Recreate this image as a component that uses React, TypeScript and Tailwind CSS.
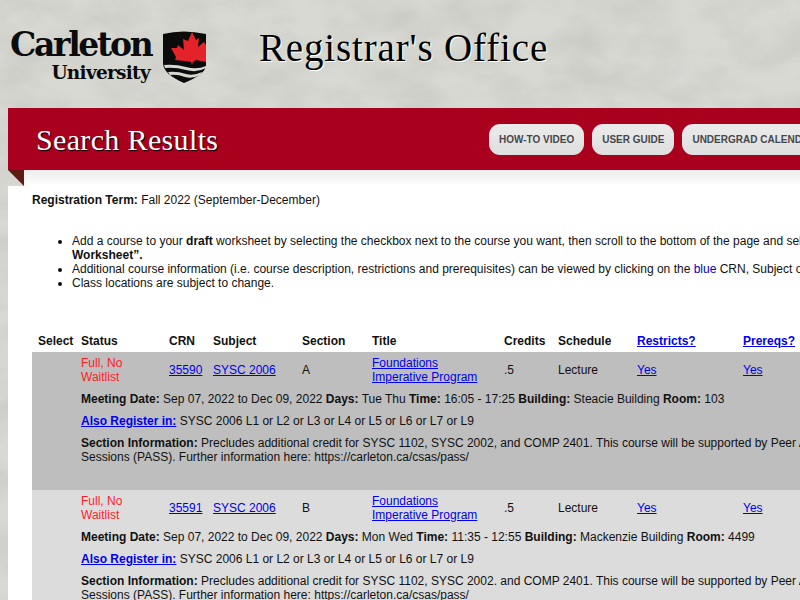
const Maple = () => (
  <svg width="43" height="53" viewBox="0 0 43 53" className="shrink-0">
    <path d="M0 3 Q20 -2 43 3 L43 34 Q43 43 21 52 Q0 43 0 32 Z" fill="#0b0b0b" />
    <path
      d="M29 1 L33 9 L36 7 L35 16 L41 11 L43 14 L43 31 L33 29 L30 31 L29 34 L28 31 L22 30 L12 29 L13 26 L8 17 L14 17 L15 14 L21 19 L20 8 L25 10 Z"
      fill="#e4222a"
    />
    <path d="M1 34 Q12 33 23 36 Q34 39 43 35 L43 37 Q34 42 23 39 Q12 36 2 37 Z" fill="#d8d8d2" />
    <path d="M5 41 Q14 40 23 43 Q31 45 39 41 L37 44 Q30 48 22 46 Q14 43 7 44 Z" fill="#d8d8d2" />
  </svg>
);

const rows = [
  {
    crn: "35590",
    section: "A",
    bg: "bg-[#bebebe]",
    days: "Tue Thu",
    time: "16:05 - 17:25",
    building: "Steacie Building",
    room: "103",
    info: "Precludes additional credit for SYSC 1102, SYSC 2002, and COMP 2401. This course will be supported by Peer Assisted Study",
  },
  {
    crn: "35591",
    section: "B",
    bg: "bg-[#dcdcdc]",
    days: "Mon Wed",
    time: "11:35 - 12:55",
    building: "Mackenzie Building",
    room: "4499",
    info: "Precludes additional credit for SYSC 1102, SYSC 2002. and COMP 2401. This course will be supported by Peer Assisted Study",
  },
];

const linkClass = "text-[#0000ee] underline";

export default function App() {
  return (
    <div className="relative w-[800px] h-[600px] overflow-hidden bg-[#d8d9d3] font-['Liberation_Sans',Arial,sans-serif] text-[12px] leading-[14px] text-[#111]">
      {/* stone texture behind the page */}
      <svg className="absolute inset-0" width="800" height="600">
        <filter id="stone">
          <feTurbulence type="fractalNoise" baseFrequency="0.018 0.03" numOctaves="6" seed="7" />
          <feColorMatrix values="0 0 0 0 0.45  0 0 0 0 0.45  0 0 0 0 0.42  1.1 0 0 0 -0.38" />
        </filter>
        <rect width="800" height="600" filter="url(#stone)" opacity="0.6" />
      </svg>

      <div className="relative">
        <header className="flex h-[108px] items-start">
          <div className="flex w-[250px] shrink-0 items-start pl-[10px] pt-[29px]">
            <div className="w-[140px] text-right font-['DejaVu_Serif',serif] font-bold text-[#0b0b0b]">
              <div className="text-[33px] leading-[32px] tracking-[-2.3px] whitespace-nowrap">Carleton</div>
              <div className="mt-[1px] text-[18.5px] leading-[22px] tracking-[-0.7px] whitespace-nowrap">University</div>
            </div>
            <div className="ml-[13px] mt-[2px]">
              <Maple />
            </div>
          </div>
          <h1 className="ml-[9px] mt-[26px] font-['Liberation_Serif',serif] text-[39px] leading-[44px] tracking-[0.85px] whitespace-nowrap text-black [text-shadow:1px_1px_0_#fff]">
            Registrar's Office
          </h1>
        </header>

        <main className="ml-[8px] w-[1000px]">
          <div className="flex h-[62px] items-center bg-[#a8001d] pl-[28px]">
            <h2 className="w-[453px] shrink-0 pt-[1px] font-['Liberation_Serif',serif] text-[30px] leading-[36px] tracking-[0.35px] whitespace-nowrap text-white [text-shadow:1px_1px_1px_#000]">
              Search Results
            </h2>
            <div className="flex gap-[8px]">
              {["How-to Video", "User Guide", "Undergrad Calendar"].map((label) => (
                <a
                  key={label}
                  className="flex h-[31px] items-center rounded-[11px] bg-linear-to-b from-[#ececec] to-[#dedede] px-[10px] pt-[2px] text-[10px] font-bold uppercase whitespace-nowrap text-[#47474b]"
                >
                  {label}
                </a>
              ))}
            </div>
          </div>
          <div className="flex h-[16px]">
            <div className="h-0 w-0 border-t-[16px] border-l-[16px] border-t-[#5f1a13] border-l-transparent" />
            <div className="grow bg-linear-to-b from-[#ececec] to-white" />
          </div>

          <div className="bg-white pl-[24px] pt-[7px]">
            <p className="h-[14px] whitespace-nowrap">
              <b>Registration Term:</b> Fall 2022 (September-December)
            </p>
            <ul className="mt-[27px] list-disc pl-[40px] whitespace-nowrap">
              <li>
                Add a course to your <b>draft</b> worksheet by selecting the checkbox next to the course you want, then scroll to the bottom of the page and select <b>“Add to</b>
                <br />
                <b>Worksheet”.</b>
              </li>
              <li>
                Additional course information (i.e. course description, restrictions and prerequisites) can be viewed by clicking on the <span className="text-[#0000cc]">blue</span> CRN, Subject or Title.
              </li>
              <li>Class locations are subject to change.</li>
            </ul>

            <table className="mt-[40px] w-[960px] table-fixed border-collapse text-left">
              <colgroup>
                <col className="w-[49px]" />
                <col className="w-[88px]" />
                <col className="w-[44px]" />
                <col className="w-[89px]" />
                <col className="w-[70px]" />
                <col className="w-[132px]" />
                <col className="w-[54px]" />
                <col className="w-[79px]" />
                <col className="w-[106px]" />
                <col />
              </colgroup>
              <thead>
                <tr className="h-[22px] font-bold">
                  <th className="pl-[6px]">Select</th>
                  <th>Status</th>
                  <th>CRN</th>
                  <th>Subject</th>
                  <th>Section</th>
                  <th>Title</th>
                  <th>Credits</th>
                  <th>Schedule</th>
                  <th><a className={linkClass}>Restricts?</a></th>
                  <th><a className={linkClass}>Prereqs?</a></th>
                </tr>
              </thead>
              {rows.map((row) => (
                <tbody key={row.crn} className={row.bg}>
                  <tr className="h-[32px] font-normal">
                    <td />
                    <td className="pt-[4px] align-top text-[#ff1c24]">Full, No<br />Waitlist</td>
                    <td className="pt-[4px]"><a className={linkClass}>{row.crn}</a></td>
                    <td className="pt-[4px]"><a className={linkClass}>SYSC 2006</a></td>
                    <td className="pt-[4px]">{row.section}</td>
                    <td className="pt-[4px] align-top">
                      <a className={linkClass}>Foundations<br />Imperative Program</a>
                    </td>
                    <td className="pt-[4px]">.5</td>
                    <td className="pt-[4px]">Lecture</td>
                    <td className="pt-[4px]"><a className={linkClass}>Yes</a></td>
                    <td className="pt-[4px]"><a className={linkClass}>Yes</a></td>
                  </tr>
                  <tr className="align-top">
                    <td />
                    <td colSpan={9} className="h-[106px] pr-[100px] pt-[8px]">
                      <p className="whitespace-nowrap">
                        <b>Meeting Date:</b> Sep 07, 2022 to Dec 09, 2022 <b>Days:</b> {row.days} <b>Time:</b> {row.time} <b>Building:</b> {row.building} <b>Room:</b> {row.room}
                      </p>
                      <p className="mt-[8px] whitespace-nowrap">
                        <a className={`${linkClass} font-bold`}>Also Register in:</a> SYSC 2006 L1 or L2 or L3 or L4 or L5 or L6 or L7 or L9
                      </p>
                      <p className="mt-[8px] whitespace-nowrap">
                        <b>Section Information:</b> {row.info}
                        <br />
                        Sessions (PASS). Further information here: https://carleton.ca/csas/pass/
                      </p>
                    </td>
                  </tr>
                </tbody>
              ))}
            </table>
          </div>
        </main>
      </div>
    </div>
  );
}
